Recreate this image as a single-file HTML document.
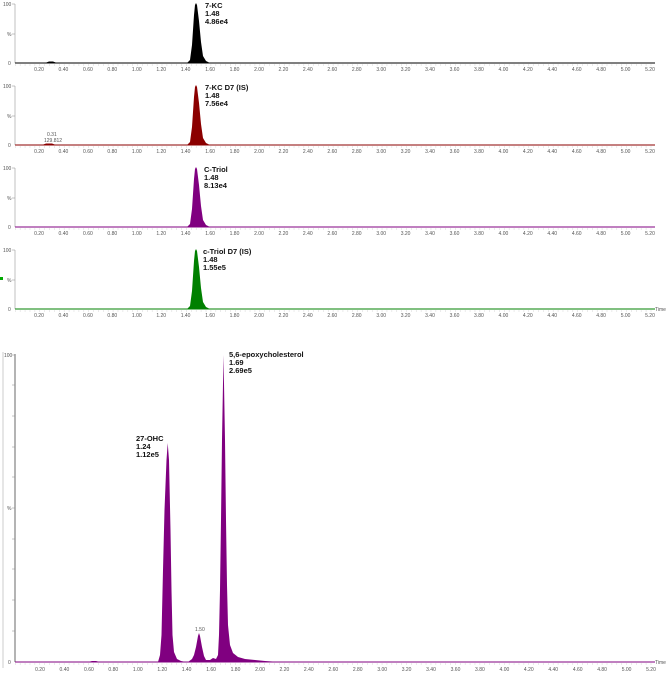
<!DOCTYPE html>
<html><head><meta charset="utf-8"><style>
html,body{margin:0;padding:0;background:#fff;width:669px;height:673px;overflow:hidden}
svg{display:block}
.t{font-family:"Liberation Sans",Arial,sans-serif;font-size:5px;fill:#555}
.b{font-family:"Liberation Sans",Arial,sans-serif;font-size:7.5px;font-weight:bold;fill:#111}
</style></head><body>
<svg width="669" height="673" viewBox="0 0 669 673" xmlns="http://www.w3.org/2000/svg">
<g stroke="#999" stroke-width="0.6">
<line x1="15" y1="4" x2="15" y2="63"/><line x1="15" y1="86" x2="15" y2="145"/>
<line x1="15" y1="168" x2="15" y2="227"/><line x1="15" y1="250" x2="15" y2="309"/>
</g>
<line x1="3" y1="352" x2="3" y2="668" stroke="#ccc" stroke-width="1"/>
<line x1="15" y1="354" x2="15" y2="662" stroke="#444" stroke-width="0.8"/>
<g stroke="#888" stroke-width="0.5">
<line x1="12" y1="4" x2="15" y2="4"/><line x1="12" y1="34" x2="15" y2="34"/>
<line x1="12" y1="86" x2="15" y2="86"/><line x1="12" y1="116" x2="15" y2="116"/>
<line x1="12" y1="168" x2="15" y2="168"/><line x1="12" y1="198" x2="15" y2="198"/>
<line x1="12" y1="250" x2="15" y2="250"/><line x1="12" y1="280" x2="15" y2="280"/>
<line x1="12" y1="355" x2="15" y2="355"/><line x1="12" y1="385" x2="15" y2="385"/><line x1="12" y1="416" x2="15" y2="416"/><line x1="12" y1="447" x2="15" y2="447"/><line x1="12" y1="477" x2="15" y2="477"/><line x1="12" y1="508" x2="15" y2="508"/><line x1="12" y1="539" x2="15" y2="539"/><line x1="12" y1="569" x2="15" y2="569"/><line x1="12" y1="600" x2="15" y2="600"/><line x1="12" y1="631" x2="15" y2="631"/>
</g>
<g class="t">
<text x="3" y="6">100</text><text x="7" y="36">%</text><text x="8" y="65">0</text>
<text x="3" y="88">100</text><text x="7" y="118">%</text><text x="8" y="147">0</text>
<text x="3" y="170">100</text><text x="7" y="200">%</text><text x="8" y="229">0</text>
<text x="3" y="252">100</text><text x="7" y="282">%</text><text x="8" y="311">0</text>
<text x="4" y="357">100</text><text x="7" y="510">%</text><text x="8" y="664">0</text>
</g>
<rect x="0" y="277" width="3" height="3" fill="#0a0"/>
<line x1="15" y1="63" x2="655" y2="63" stroke="#000" stroke-width="1"/>
<line x1="15" y1="145" x2="655" y2="145" stroke="#8b0000" stroke-width="1"/>
<line x1="15" y1="227" x2="655" y2="227" stroke="#800080" stroke-width="1"/>
<line x1="15" y1="309" x2="655" y2="309" stroke="#008000" stroke-width="1"/>
<line x1="15" y1="662" x2="655" y2="662" stroke="#800080" stroke-width="1"/>
<g stroke="#777" stroke-width="0.5" stroke-dasharray="0.6 4.29">
<line x1="15" y1="65" x2="655" y2="65"/><line x1="15" y1="147" x2="655" y2="147"/>
<line x1="15" y1="229" x2="655" y2="229"/><line x1="15" y1="311" x2="655" y2="311"/>
<line x1="15" y1="664" x2="655" y2="664"/>
</g>
<polygon fill="#000" points="187,63 190,60 192,45 194,15 195,5 196,3 197,5 199,21 201,42 203,56 206,61 210,63"/>
<polygon fill="#000" points="45,63 49,61.5 53,61.5 57,63"/>
<polygon fill="#8b0000" points="187,145 190,142 192,127 194,97 195,87 196,85 197,87 199,103 201,124 203,138 206,143 210,145"/>
<polygon fill="#8b0000" points="42,145 46,143.5 52,143.5 56,145"/>
<polygon fill="#800080" points="187,227 190,224 192,209 194,179 195,169 196,167 197,169 199,185 201,206 203,220 206,225 210,227"/>
<polygon fill="#008000" points="187,309 190,306 192,291 194,261 195,251 196,249 197,251 199,267 201,288 203,302 206,307 210,309"/>
<polygon fill="#800080" points="158,662 160,655 161.5,635 163,570 164.5,510 166.5,460 167.7,443 169,460 170.5,530 171.5,590 172.5,635 174,652 177,659 181,661 186,662"/>
<polygon fill="#800080" points="188,662 192,659 194,655 196,647 198,636 199,633 200,636 202,647 204,656 206,660 210,660 213,658 216,659 218,655 219,635 220,590 221,520 222,440 223.5,355 225,440 226,520 227,585 228,625 230,645 233,653 238,657 245,659 255,660 265,661 280,662"/>
<polygon fill="#800080" points="88,662 92,661 96,661 100,662"/>
<g class="b">
<text x="205" y="8">7-KC</text><text x="205" y="16">1.48</text><text x="205" y="24">4.86e4</text>
<text x="205" y="90">7-KC D7 (IS)</text><text x="205" y="98">1.48</text><text x="205" y="106">7.56e4</text>
<text x="204" y="172">C-Triol</text><text x="204" y="180">1.48</text><text x="204" y="188">8.13e4</text>
<text x="203" y="254">c-Triol D7 (IS)</text><text x="203" y="262">1.48</text><text x="203" y="270">1.55e5</text>
<text x="229" y="357">5,6-epoxycholesterol</text><text x="229" y="365">1.69</text><text x="229" y="373">2.69e5</text>
<text x="136" y="441">27-OHC</text><text x="136" y="449">1.24</text><text x="136" y="457">1.12e5</text>
</g>
<g class="t">
<text x="47" y="136">0.31</text><text x="44" y="142">129.812</text>
<text x="195" y="631">1.50</text>
<text x="655" y="311">Time</text><text x="655" y="664">Time</text>
</g>
<g class="t" text-anchor="middle">
<text y="71"><tspan x="39">0.20</tspan><tspan x="63.4">0.40</tspan><tspan x="87.9">0.60</tspan><tspan x="112.3">0.80</tspan><tspan x="136.8">1.00</tspan><tspan x="161.2">1.20</tspan><tspan x="185.6">1.40</tspan><tspan x="210.1">1.60</tspan><tspan x="234.5">1.80</tspan><tspan x="259">2.00</tspan><tspan x="283.4">2.20</tspan><tspan x="307.8">2.40</tspan><tspan x="332.3">2.60</tspan><tspan x="356.7">2.80</tspan><tspan x="381.2">3.00</tspan><tspan x="405.6">3.20</tspan><tspan x="430">3.40</tspan><tspan x="454.5">3.60</tspan><tspan x="478.9">3.80</tspan><tspan x="503.4">4.00</tspan><tspan x="527.8">4.20</tspan><tspan x="552.2">4.40</tspan><tspan x="576.7">4.60</tspan><tspan x="601.1">4.80</tspan><tspan x="625.6">5.00</tspan><tspan x="650">5.20</tspan></text>
<text y="153"><tspan x="39">0.20</tspan><tspan x="63.4">0.40</tspan><tspan x="87.9">0.60</tspan><tspan x="112.3">0.80</tspan><tspan x="136.8">1.00</tspan><tspan x="161.2">1.20</tspan><tspan x="185.6">1.40</tspan><tspan x="210.1">1.60</tspan><tspan x="234.5">1.80</tspan><tspan x="259">2.00</tspan><tspan x="283.4">2.20</tspan><tspan x="307.8">2.40</tspan><tspan x="332.3">2.60</tspan><tspan x="356.7">2.80</tspan><tspan x="381.2">3.00</tspan><tspan x="405.6">3.20</tspan><tspan x="430">3.40</tspan><tspan x="454.5">3.60</tspan><tspan x="478.9">3.80</tspan><tspan x="503.4">4.00</tspan><tspan x="527.8">4.20</tspan><tspan x="552.2">4.40</tspan><tspan x="576.7">4.60</tspan><tspan x="601.1">4.80</tspan><tspan x="625.6">5.00</tspan><tspan x="650">5.20</tspan></text>
<text y="235"><tspan x="39">0.20</tspan><tspan x="63.4">0.40</tspan><tspan x="87.9">0.60</tspan><tspan x="112.3">0.80</tspan><tspan x="136.8">1.00</tspan><tspan x="161.2">1.20</tspan><tspan x="185.6">1.40</tspan><tspan x="210.1">1.60</tspan><tspan x="234.5">1.80</tspan><tspan x="259">2.00</tspan><tspan x="283.4">2.20</tspan><tspan x="307.8">2.40</tspan><tspan x="332.3">2.60</tspan><tspan x="356.7">2.80</tspan><tspan x="381.2">3.00</tspan><tspan x="405.6">3.20</tspan><tspan x="430">3.40</tspan><tspan x="454.5">3.60</tspan><tspan x="478.9">3.80</tspan><tspan x="503.4">4.00</tspan><tspan x="527.8">4.20</tspan><tspan x="552.2">4.40</tspan><tspan x="576.7">4.60</tspan><tspan x="601.1">4.80</tspan><tspan x="625.6">5.00</tspan><tspan x="650">5.20</tspan></text>
<text y="317"><tspan x="39">0.20</tspan><tspan x="63.4">0.40</tspan><tspan x="87.9">0.60</tspan><tspan x="112.3">0.80</tspan><tspan x="136.8">1.00</tspan><tspan x="161.2">1.20</tspan><tspan x="185.6">1.40</tspan><tspan x="210.1">1.60</tspan><tspan x="234.5">1.80</tspan><tspan x="259">2.00</tspan><tspan x="283.4">2.20</tspan><tspan x="307.8">2.40</tspan><tspan x="332.3">2.60</tspan><tspan x="356.7">2.80</tspan><tspan x="381.2">3.00</tspan><tspan x="405.6">3.20</tspan><tspan x="430">3.40</tspan><tspan x="454.5">3.60</tspan><tspan x="478.9">3.80</tspan><tspan x="503.4">4.00</tspan><tspan x="527.8">4.20</tspan><tspan x="552.2">4.40</tspan><tspan x="576.7">4.60</tspan><tspan x="601.1">4.80</tspan><tspan x="625.6">5.00</tspan><tspan x="650">5.20</tspan></text>
<text y="671"><tspan x="40">0.20</tspan><tspan x="64.4">0.40</tspan><tspan x="88.9">0.60</tspan><tspan x="113.3">0.80</tspan><tspan x="137.8">1.00</tspan><tspan x="162.2">1.20</tspan><tspan x="186.6">1.40</tspan><tspan x="211.1">1.60</tspan><tspan x="235.5">1.80</tspan><tspan x="260">2.00</tspan><tspan x="284.4">2.20</tspan><tspan x="308.8">2.40</tspan><tspan x="333.3">2.60</tspan><tspan x="357.7">2.80</tspan><tspan x="382.2">3.00</tspan><tspan x="406.6">3.20</tspan><tspan x="431">3.40</tspan><tspan x="455.5">3.60</tspan><tspan x="479.9">3.80</tspan><tspan x="504.4">4.00</tspan><tspan x="528.8">4.20</tspan><tspan x="553.2">4.40</tspan><tspan x="577.7">4.60</tspan><tspan x="602.1">4.80</tspan><tspan x="626.6">5.00</tspan><tspan x="651">5.20</tspan></text>
</g>
</svg>
</body></html>
